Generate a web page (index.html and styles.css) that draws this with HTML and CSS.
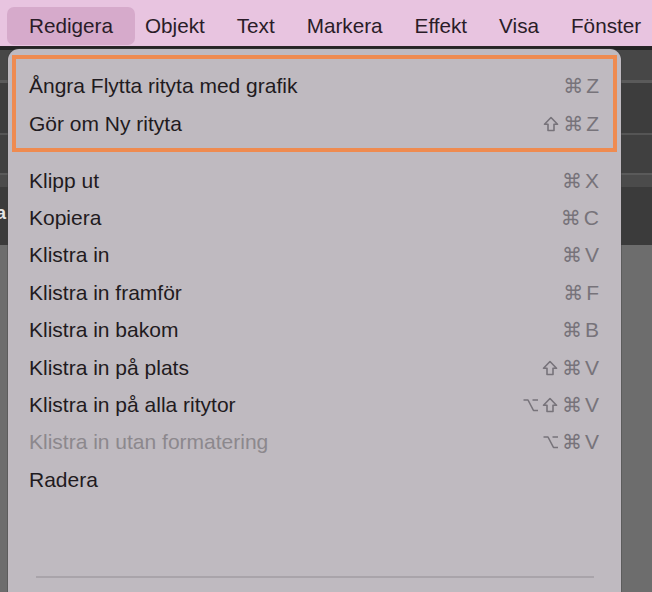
FILE: index.html
```html
<!DOCTYPE html>
<html lang="sv">
<head>
<meta charset="utf-8">
<link rel="stylesheet" href="styles.css">
</head>
<body>
<div class="menubar">
  <span class="mb-item active">Redigera</span>
  <span class="mb-item">Objekt</span>
  <span class="mb-item">Text</span>
  <span class="mb-item">Markera</span>
  <span class="mb-item">Effekt</span>
  <span class="mb-item">Visa</span>
  <span class="mb-item">Fönster</span>
</div>
<div class="workspace">
  <div class="peek">a</div>
  <div class="menu">
    <div class="group">
      <div class="row"><span class="label">Ångra Flytta rityta med grafik</span><span class="sc"><span class="g">⌘</span>Z</span></div>
      <div class="row"><span class="label">Gör om Ny rityta</span><span class="sc"><svg class="shift" viewBox="0 0 16 16"><path d="M8 1.5 L14.5 8.3 H11 V14.5 H5 V8.3 H1.5 Z"/></svg><span class="g">⌘</span>Z</span></div>
    </div>
    <div class="list">
      <div class="row"><span class="label">Klipp ut</span><span class="sc"><span class="g">⌘</span>X</span></div>
      <div class="row"><span class="label">Kopiera</span><span class="sc"><span class="g">⌘</span>C</span></div>
      <div class="row"><span class="label">Klistra in</span><span class="sc"><span class="g">⌘</span>V</span></div>
      <div class="row"><span class="label">Klistra in framför</span><span class="sc"><span class="g">⌘</span>F</span></div>
      <div class="row"><span class="label">Klistra in bakom</span><span class="sc"><span class="g">⌘</span>B</span></div>
      <div class="row"><span class="label">Klistra in på plats</span><span class="sc"><svg class="shift" viewBox="0 0 16 16"><path d="M8 1.5 L14.5 8.3 H11 V14.5 H5 V8.3 H1.5 Z"/></svg><span class="g">⌘</span>V</span></div>
      <div class="row"><span class="label">Klistra in på alla ritytor</span><span class="sc"><svg class="opt" viewBox="0 0 16 16"><path d="M1 3 H5.5 L11 13.5 H15.5 M10 3 H15.5"/></svg><svg class="shift" viewBox="0 0 16 16"><path d="M8 1.5 L14.5 8.3 H11 V14.5 H5 V8.3 H1.5 Z"/></svg><span class="g">⌘</span>V</span></div>
      <div class="row disabled"><span class="label">Klistra in utan formatering</span><span class="sc"><svg class="opt" viewBox="0 0 16 16"><path d="M1 3 H5.5 L11 13.5 H15.5 M10 3 H15.5"/></svg><span class="g">⌘</span>V</span></div>
      <div class="row"><span class="label">Radera</span><span class="sc"></span></div>
    </div>
    <div class="sep"></div>
  </div>
</div>
</body>
</html>
```

FILE: styles.css
```css
* { box-sizing: border-box; }
html, body {
  margin: 0;
  padding: 0;
  width: 652px;
  height: 592px;
  overflow: hidden;
  font-family: "Liberation Sans", Arial, sans-serif;
}
body { background: #6d6d6d; }

.menubar {
  height: 47px;
  background: #e8c4e0;
  display: flex;
  align-items: flex-start;
  padding: 7px 0 0 13px;
  border-bottom: 1px solid #2a2529;
}
.mb-item {
  font-size: 20.7px;
  color: #2a1c28;
  padding: 0 16px;
  line-height: 38px;
  white-space: nowrap;
}
.mb-item.active {
  background: #d6aacb;
  border-radius: 7px;
  padding: 0 22px;
  margin: 0 -6px;
}

.workspace {
  position: relative;
  height: 545px;
  background: linear-gradient(to bottom,
    #252525 0, #252525 3px,
    #474747 3px, #474747 33px,
    #5a5a5a 33px, #5a5a5a 36px,
    #3d3d3d 36px, #3d3d3d 86px,
    #555555 86px, #555555 88px,
    #404040 88px, #404040 126px,
    #5a5a5a 126px, #5a5a5a 128px,
    #4b4b4b 128px, #4b4b4b 140px,
    #3b3b3b 140px, #3b3b3b 198px,
    #6d6d6d 198px);
}
.peek {
  position: absolute;
  left: -4px;
  top: 156px;
  color: #e6e6e6;
  font-size: 18px;
  font-weight: bold;
}

.menu {
  position: absolute;
  left: 8px;
  top: 2px;
  width: 613px;
  height: 560px;
  background: #bfbac0;
  border-radius: 11px 11px 0 0;
  padding-top: 6px;
  box-shadow: 0 0 0 1px rgba(60, 60, 60, 0.35);
}
.group {
  margin: 0 4px;
  border: 4px solid #ef8b50;
  padding: 8px 14px 5px 13px;
}
.list {
  padding: 10px 22px 0 21px;
}
.row {
  display: flex;
  justify-content: space-between;
  align-items: center;
  height: 38px;
  font-size: 21px;
  color: #1f1b20;
}
.list .row { height: 37.4px; }
.row.disabled { color: #8c888d; }
.sc {
  color: #77737a;
  display: flex;
  align-items: center;
}
.g {
  font-family: "DejaVu Sans", sans-serif;
  font-size: 20px;
  margin-right: 3px;
}
.shift, .opt {
  width: 16px;
  height: 16px;
  margin-right: 4px;
  fill: none;
  stroke: #77737a;
  stroke-width: 1.6;
  stroke-linejoin: round;
}
.opt { width: 17px; margin-right: 3px; }
.sep {
  margin: 77px 27px 0 28px;
  height: 2px;
  background: #a9a4aa;
}
```
